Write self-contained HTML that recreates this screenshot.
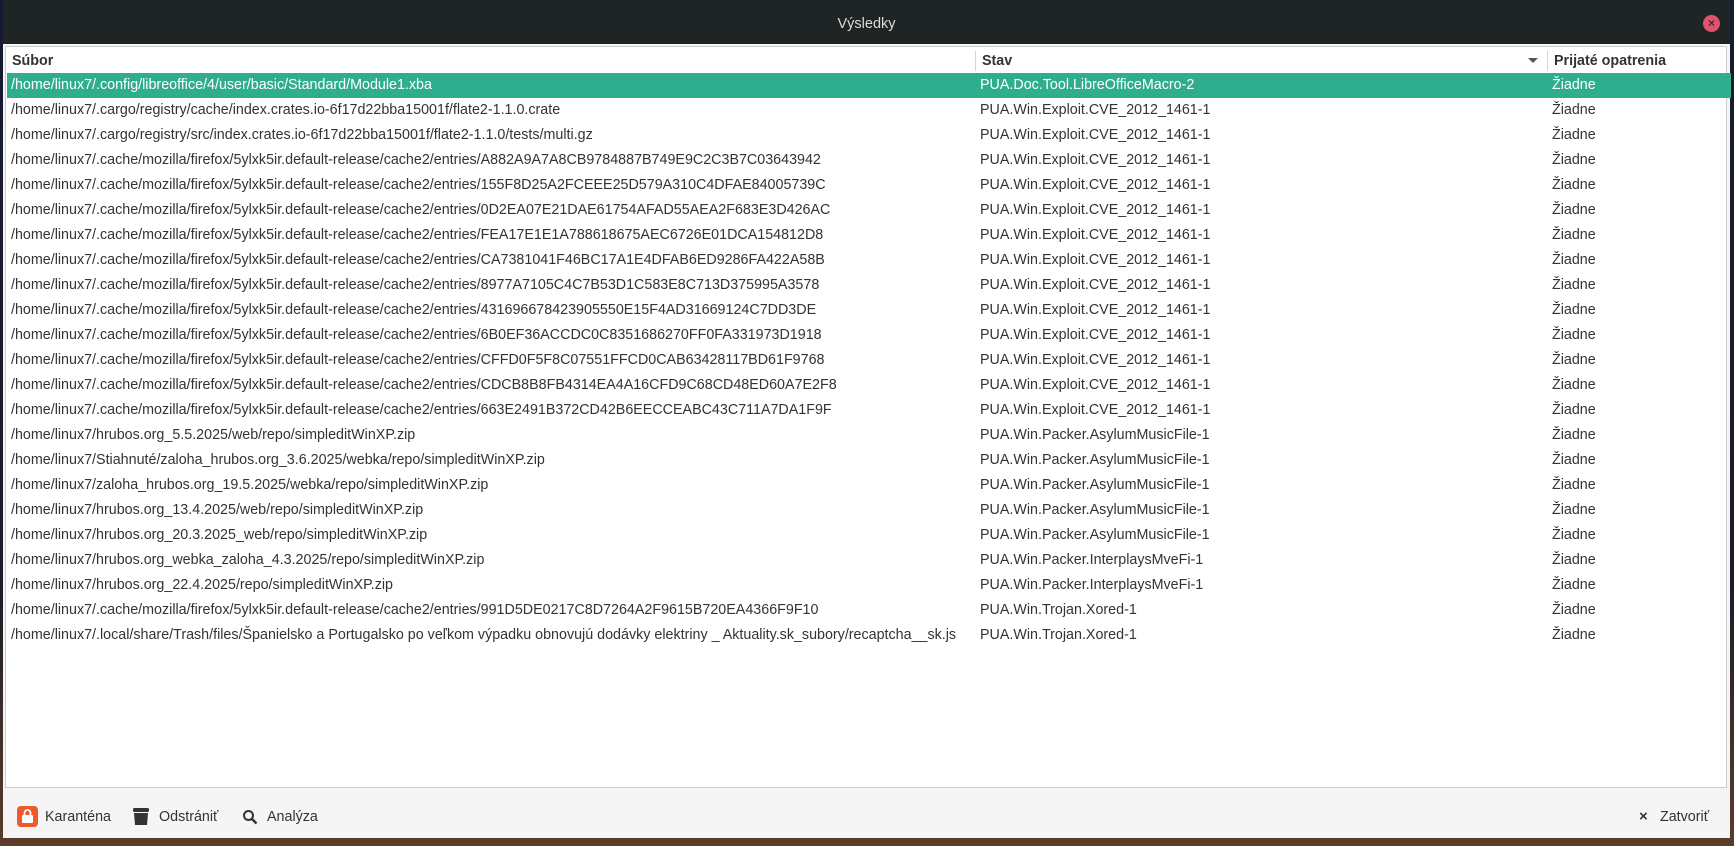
<!DOCTYPE html>
<html><head><meta charset="utf-8"><style>
body{margin:0;width:1734px;height:846px;background:linear-gradient(#151a30,#1d1d2a 70%,#5a3d2a);overflow:hidden;font-family:"Liberation Sans","DejaVu Sans",sans-serif;position:relative}
.win{position:absolute;left:3px;top:0;width:1727px;height:838px;background:#f5f5f5}
.title{position:absolute;left:0;top:0;width:100%;height:44px;background:#1f2424;color:#dcdcdc;font-size:14.5px;text-align:center;line-height:48px}
.cls{position:absolute;right:10px;top:15px;width:17px;height:17px;border-radius:50%;background:#e0536a;color:#333;font-size:12px;line-height:17px;text-align:center;font-weight:bold}
.list{position:absolute;left:2px;top:46px;width:1720px;height:740px;background:#fff;border:1px solid #ccc}
.hdr{position:absolute;top:0;height:26px;font-weight:bold;font-size:14.3px;color:#333;line-height:28px}
.sep{position:absolute;top:4px;width:1px;height:20px;background:#d6d6d6}
.row{position:absolute;left:1px;width:1724px;height:25px;font-size:14.3px;color:#333;line-height:25px;white-space:nowrap}
.row span{position:absolute}
.sel{background:#2fae8e;color:#fff}
.c1{left:4px}.c2{left:973px}.c3{left:1545px}
.btn{position:absolute;top:806px;font-size:14.3px;color:#333;line-height:22px}
</style></head><body>
<div class="win">
<div class="title">Výsledky<div class="cls">×</div></div>
<div class="list">
<div class="hdr" style="left:6px">Súbor</div>
<div class="sep" style="left:969px"></div>
<div class="hdr" style="left:976px">Stav</div>
<div style="position:absolute;left:1522px;top:11px;border-left:5px solid transparent;border-right:5px solid transparent;border-top:5px solid #555"></div>
<div class="sep" style="left:1541px"></div>
<div class="hdr" style="left:1548px">Prijaté opatrenia</div>
<div class="row sel" style="top:26px"><span class="c1">/home/linux7/.config/libreoffice/4/user/basic/Standard/Module1.xba</span><span class="c2">PUA.Doc.Tool.LibreOfficeMacro-2</span><span class="c3">Žiadne</span></div>
<div class="row" style="top:51px"><span class="c1">/home/linux7/.cargo/registry/cache/index.crates.io-6f17d22bba15001f/flate2-1.1.0.crate</span><span class="c2">PUA.Win.Exploit.CVE_2012_1461-1</span><span class="c3">Žiadne</span></div>
<div class="row" style="top:76px"><span class="c1">/home/linux7/.cargo/registry/src/index.crates.io-6f17d22bba15001f/flate2-1.1.0/tests/multi.gz</span><span class="c2">PUA.Win.Exploit.CVE_2012_1461-1</span><span class="c3">Žiadne</span></div>
<div class="row" style="top:101px"><span class="c1">/home/linux7/.cache/mozilla/firefox/5ylxk5ir.default-release/cache2/entries/A882A9A7A8CB9784887B749E9C2C3B7C03643942</span><span class="c2">PUA.Win.Exploit.CVE_2012_1461-1</span><span class="c3">Žiadne</span></div>
<div class="row" style="top:126px"><span class="c1">/home/linux7/.cache/mozilla/firefox/5ylxk5ir.default-release/cache2/entries/155F8D25A2FCEEE25D579A310C4DFAE84005739C</span><span class="c2">PUA.Win.Exploit.CVE_2012_1461-1</span><span class="c3">Žiadne</span></div>
<div class="row" style="top:151px"><span class="c1">/home/linux7/.cache/mozilla/firefox/5ylxk5ir.default-release/cache2/entries/0D2EA07E21DAE61754AFAD55AEA2F683E3D426AC</span><span class="c2">PUA.Win.Exploit.CVE_2012_1461-1</span><span class="c3">Žiadne</span></div>
<div class="row" style="top:176px"><span class="c1">/home/linux7/.cache/mozilla/firefox/5ylxk5ir.default-release/cache2/entries/FEA17E1E1A788618675AEC6726E01DCA154812D8</span><span class="c2">PUA.Win.Exploit.CVE_2012_1461-1</span><span class="c3">Žiadne</span></div>
<div class="row" style="top:201px"><span class="c1">/home/linux7/.cache/mozilla/firefox/5ylxk5ir.default-release/cache2/entries/CA7381041F46BC17A1E4DFAB6ED9286FA422A58B</span><span class="c2">PUA.Win.Exploit.CVE_2012_1461-1</span><span class="c3">Žiadne</span></div>
<div class="row" style="top:226px"><span class="c1">/home/linux7/.cache/mozilla/firefox/5ylxk5ir.default-release/cache2/entries/8977A7105C4C7B53D1C583E8C713D375995A3578</span><span class="c2">PUA.Win.Exploit.CVE_2012_1461-1</span><span class="c3">Žiadne</span></div>
<div class="row" style="top:251px"><span class="c1">/home/linux7/.cache/mozilla/firefox/5ylxk5ir.default-release/cache2/entries/431696678423905550E15F4AD31669124C7DD3DE</span><span class="c2">PUA.Win.Exploit.CVE_2012_1461-1</span><span class="c3">Žiadne</span></div>
<div class="row" style="top:276px"><span class="c1">/home/linux7/.cache/mozilla/firefox/5ylxk5ir.default-release/cache2/entries/6B0EF36ACCDC0C8351686270FF0FA331973D1918</span><span class="c2">PUA.Win.Exploit.CVE_2012_1461-1</span><span class="c3">Žiadne</span></div>
<div class="row" style="top:301px"><span class="c1">/home/linux7/.cache/mozilla/firefox/5ylxk5ir.default-release/cache2/entries/CFFD0F5F8C07551FFCD0CAB63428117BD61F9768</span><span class="c2">PUA.Win.Exploit.CVE_2012_1461-1</span><span class="c3">Žiadne</span></div>
<div class="row" style="top:326px"><span class="c1">/home/linux7/.cache/mozilla/firefox/5ylxk5ir.default-release/cache2/entries/CDCB8B8FB4314EA4A16CFD9C68CD48ED60A7E2F8</span><span class="c2">PUA.Win.Exploit.CVE_2012_1461-1</span><span class="c3">Žiadne</span></div>
<div class="row" style="top:351px"><span class="c1">/home/linux7/.cache/mozilla/firefox/5ylxk5ir.default-release/cache2/entries/663E2491B372CD42B6EECCEABC43C711A7DA1F9F</span><span class="c2">PUA.Win.Exploit.CVE_2012_1461-1</span><span class="c3">Žiadne</span></div>
<div class="row" style="top:376px"><span class="c1">/home/linux7/hrubos.org_5.5.2025/web/repo/simpleditWinXP.zip</span><span class="c2">PUA.Win.Packer.AsylumMusicFile-1</span><span class="c3">Žiadne</span></div>
<div class="row" style="top:401px"><span class="c1">/home/linux7/Stiahnuté/zaloha_hrubos.org_3.6.2025/webka/repo/simpleditWinXP.zip</span><span class="c2">PUA.Win.Packer.AsylumMusicFile-1</span><span class="c3">Žiadne</span></div>
<div class="row" style="top:426px"><span class="c1">/home/linux7/zaloha_hrubos.org_19.5.2025/webka/repo/simpleditWinXP.zip</span><span class="c2">PUA.Win.Packer.AsylumMusicFile-1</span><span class="c3">Žiadne</span></div>
<div class="row" style="top:451px"><span class="c1">/home/linux7/hrubos.org_13.4.2025/web/repo/simpleditWinXP.zip</span><span class="c2">PUA.Win.Packer.AsylumMusicFile-1</span><span class="c3">Žiadne</span></div>
<div class="row" style="top:476px"><span class="c1">/home/linux7/hrubos.org_20.3.2025_web/repo/simpleditWinXP.zip</span><span class="c2">PUA.Win.Packer.AsylumMusicFile-1</span><span class="c3">Žiadne</span></div>
<div class="row" style="top:501px"><span class="c1">/home/linux7/hrubos.org_webka_zaloha_4.3.2025/repo/simpleditWinXP.zip</span><span class="c2">PUA.Win.Packer.InterplaysMveFi-1</span><span class="c3">Žiadne</span></div>
<div class="row" style="top:526px"><span class="c1">/home/linux7/hrubos.org_22.4.2025/repo/simpleditWinXP.zip</span><span class="c2">PUA.Win.Packer.InterplaysMveFi-1</span><span class="c3">Žiadne</span></div>
<div class="row" style="top:551px"><span class="c1">/home/linux7/.cache/mozilla/firefox/5ylxk5ir.default-release/cache2/entries/991D5DE0217C8D7264A2F9615B720EA4366F9F10</span><span class="c2">PUA.Win.Trojan.Xored-1</span><span class="c3">Žiadne</span></div>
<div class="row" style="top:576px"><span class="c1">/home/linux7/.local/share/Trash/files/Španielsko a Portugalsko po veľkom výpadku obnovujú dodávky elektriny _ Aktuality.sk_subory/recaptcha__sk.js</span><span class="c2">PUA.Win.Trojan.Xored-1</span><span class="c3">Žiadne</span></div>
</div>
<svg style="position:absolute;left:14px;top:806px" width="21" height="21"><rect width="21" height="21" rx="4" fill="#f0592a"/><rect x="5" y="9" width="11" height="8" rx="1" fill="#fff"/><path d="M7.5 9V7a3 3 0 0 1 6 0v2" stroke="#fff" stroke-width="1.8" fill="none"/></svg>
<div class="btn" style="left:42px">Karanténa</div>
<svg style="position:absolute;left:130px;top:808px" width="16" height="18"><rect x="0" y="0" width="16" height="4" rx="1.5" fill="#333"/><path d="M1 5h14l-1 12H2z" fill="#333"/></svg>
<div class="btn" style="left:156px">Odstrániť</div>
<svg style="position:absolute;left:239px;top:809px" width="16" height="16"><circle cx="6.5" cy="6.5" r="4.5" stroke="#333" stroke-width="2" fill="none"/><path d="M10 10l4.5 4.5" stroke="#333" stroke-width="2.4"/></svg>
<div class="btn" style="left:264px">Analýza</div>
<div class="btn" style="left:1636px;font-weight:bold;font-size:15px">×</div>
<div class="btn" style="left:1657px">Zatvoriť</div>
</div>
</body></html>
